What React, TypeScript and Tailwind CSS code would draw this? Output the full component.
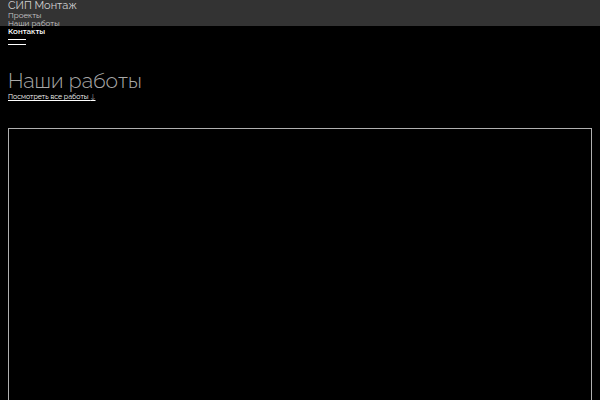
import React from 'react';

const font = { fontFamily: '"Raleway", "Lato", "Open Sans", sans-serif' };

export default function App() {
  return (
    <div className="w-[600px] h-[400px] overflow-hidden bg-black text-white" style={font}>
      <header className="h-[26px] bg-[#333333] px-2 relative z-10">
        <div className="text-[11px] leading-[11px] text-[#d0d0d0]">СИП Монтаж</div>
        <nav className="flex flex-col text-[8px] leading-[8px]">
          <a className="text-[#c8c8c8]">Проекты</a>
          <a className="text-[#c8c8c8]">Наши работы</a>
          <a className="text-white font-semibold">Контакты</a>
        </nav>
        <div className="flex flex-col gap-[4px] mt-[4px] w-[18px]">
          <span className="h-px bg-white" />
          <span className="h-px bg-white" />
        </div>
      </header>
      <main className="px-2 pt-[44px]">
        <h2 className="text-[21px] leading-[22px] font-light text-[#a8a8a8]">Наши работы</h2>
        <a className="block text-[7px] leading-[9px] text-white underline">
          Посмотреть все работы <span className="text-[#888]">↓</span>
        </a>
        <div className="mt-[27px] h-[300px] border border-[#b0b0b0]" />
      </main>
    </div>
  );
}
